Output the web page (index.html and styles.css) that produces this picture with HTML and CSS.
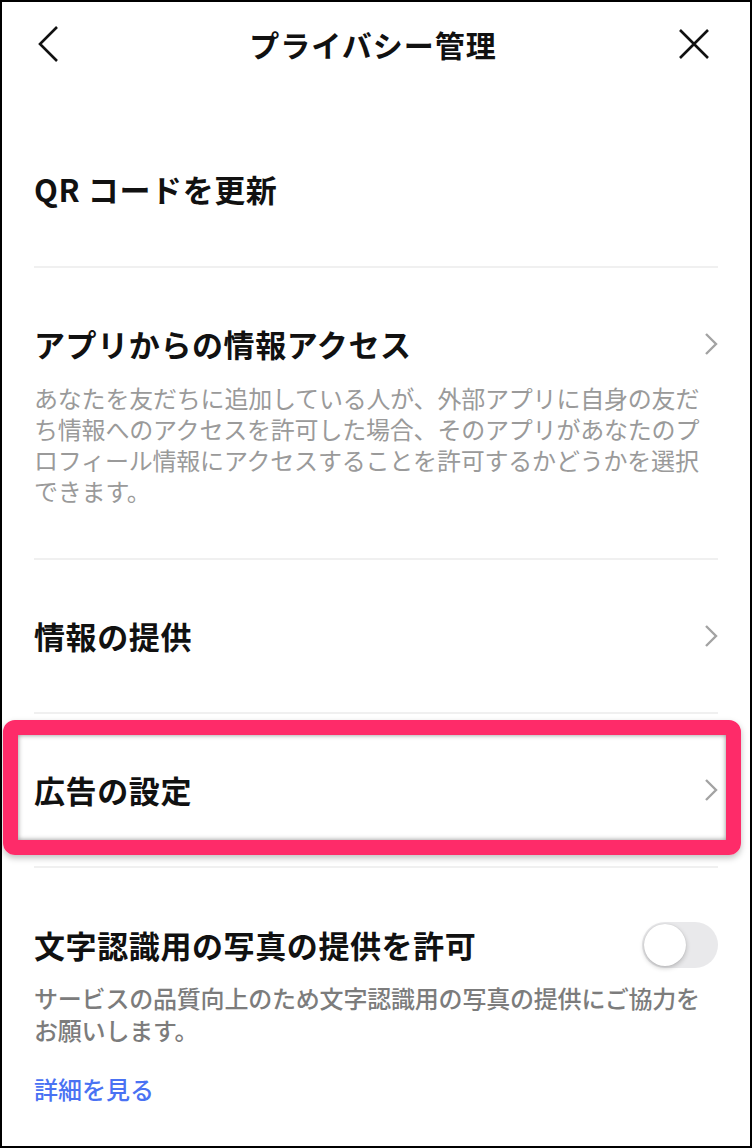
FILE: index.html
```html
<!DOCTYPE html>
<html lang="ja">
<head>
<meta charset="utf-8">
<link rel="stylesheet" href="styles.css">
</head>
<body>
<div class="screen">
  <header class="header">
    <svg class="back" width="24" height="36" viewBox="0 0 24 36"><path d="M21 1 L4 18 L21 35" fill="none" stroke="#111" stroke-width="2.6"/></svg>
    <h1 class="title">プライバシー管理</h1>
    <svg class="close" width="32" height="32" viewBox="0 0 32 32"><path d="M2 2 L30 30 M30 2 L2 30" fill="none" stroke="#111" stroke-width="2.6"/></svg>
  </header>
  <main class="list">
    <div class="row simple first">
      <span class="row-title">QR コードを更新</span>
    </div>
    <div class="row detail">
      <div class="row-head">
        <span class="row-title">アプリからの情報アクセス</span>
        <svg class="chev" width="14" height="24" viewBox="0 0 14 24"><path d="M2 2 L12 12 L2 22" fill="none" stroke="#a3a3a3" stroke-width="2.4"/></svg>
      </div>
      <p class="desc">あなたを友だちに追加している人が、外部アプリに自身の友だち情報へのアクセスを許可した場合、そのアプリがあなたのプロフィール情報にアクセスすることを許可するかどうかを選択できます。</p>
    </div>
    <div class="row simple">
      <span class="row-title">情報の提供</span>
      <svg class="chev" width="14" height="24" viewBox="0 0 14 24"><path d="M2 2 L12 12 L2 22" fill="none" stroke="#a3a3a3" stroke-width="2.4"/></svg>
    </div>
    <div class="row simple highlighted">
      <span class="row-title">広告の設定</span>
      <svg class="chev" width="14" height="24" viewBox="0 0 14 24"><path d="M2 2 L12 12 L2 22" fill="none" stroke="#a3a3a3" stroke-width="2.4"/></svg>
      <div class="highlight"></div>
    </div>
    <div class="row last">
      <div class="row-head">
        <span class="row-title">文字認識用の写真の提供を許可</span>
        <div class="toggle"><div class="knob"></div></div>
      </div>
      <p class="desc strong">サービスの品質向上のため文字認識用の写真の提供にご協力をお願いします。</p>
      <a class="link">詳細を見る</a>
    </div>
  </main>
</div>
</body>
</html>
```
FILE: styles.css
```css
html, body {
  margin: 0;
  padding: 0;
  background: #fff;
}
body {
  font-family: "Noto Sans CJK JP", "Noto Sans", sans-serif;
  color: #111;
}
.screen {
  box-sizing: border-box;
  width: 752px;
  height: 1148px;
  border: 2px solid #000;
  overflow: hidden;
  background: #fff;
}
.header {
  height: 88px;
  display: flex;
  align-items: center;
  justify-content: space-between;
  padding: 0 40px 0 34px;
  margin-top: -2px;
}
.title {
  margin: 0;
  font-size: 30px;
  font-weight: 700;
  letter-spacing: 1px;
  margin-left: 8px;
}
.back { display: block; }
.close { display: block; }
.list {
  padding: 24px 32px 0 32px;
}
.row {
  border-top: 2px solid #f0f0f0;
}
.row.first {
  border-top: none;
}
.row.simple {
  height: 152px;
  display: flex;
  align-items: center;
  justify-content: space-between;
  position: relative;
}
.row.first { height: 154px; }
.row-title {
  font-size: 31px;
  font-weight: 700;
  line-height: 40px;
  letter-spacing: 0.6px;
}
.chev {
  display: block;
  margin-right: 0;
}
.row.detail {
  padding: 56px 0 52px;
}
.row-head {
  display: flex;
  align-items: center;
  justify-content: space-between;
}
.desc {
  margin: 18px 0 0;
  font-size: 24px;
  line-height: 31px;
  color: #9a9a9a;
  font-weight: 400;
  letter-spacing: -0.2px;
}
.desc.strong {
  color: #7c7c7c;
  font-weight: 500;
  line-height: 32px;
  margin-top: 14px;
}
.row.last {
  padding: 54px 0 0;
}
.toggle {
  width: 76px;
  height: 46px;
  border-radius: 23px;
  background: #e9e9eb;
  display: flex;
  align-items: center;
  padding: 2px;
  box-sizing: border-box;
}
.knob {
  width: 42px;
  height: 42px;
  border-radius: 50%;
  background: #fff;
  box-shadow: 0 2px 5px rgba(0,0,0,0.22), 0 0 1px rgba(0,0,0,0.15);
}
.link {
  display: block;
  margin-top: 27px;
  font-size: 24px;
  line-height: 32px;
  color: #4a72f3;
  font-weight: 500;
}
.highlight {
  position: absolute;
  left: -31px;
  right: -23px;
  top: 6px;
  bottom: 11px;
  border: 15px solid #fe2b69;
  border-radius: 12px;
  box-shadow: inset 0 0 5px rgba(0,0,0,0.45), 0 3px 6px rgba(0,0,0,0.25);
  pointer-events: none;
}
```
